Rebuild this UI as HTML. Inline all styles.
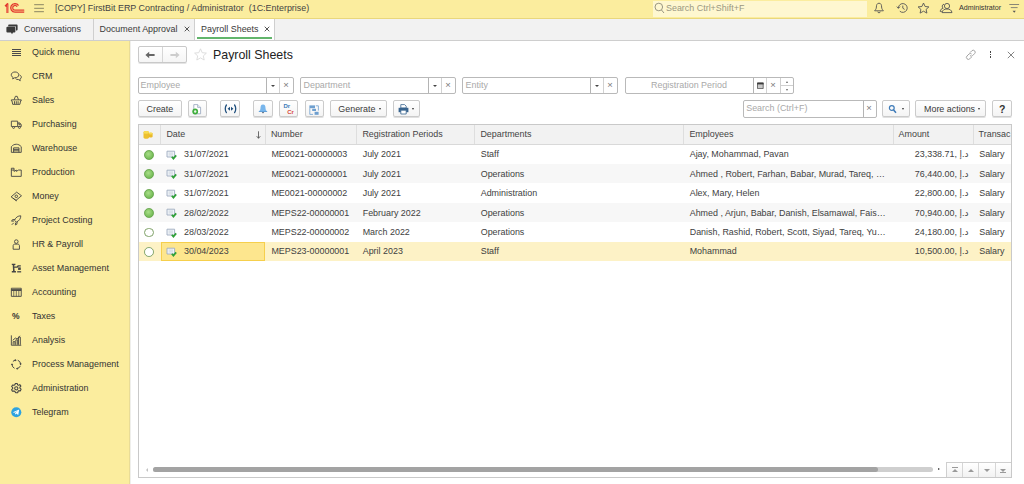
<!DOCTYPE html>
<html lang="en">
<head>
<meta charset="utf-8">
<title>Payroll Sheets</title>
<style>
*{box-sizing:border-box;margin:0;padding:0}
html,body{width:1024px;height:484px;overflow:hidden;background:#fff}
body{font-family:"Liberation Sans","DejaVu Sans",sans-serif;font-size:8.93px;color:#3a3a3a;position:relative}
.abs{position:absolute}
.t{position:absolute;white-space:pre;line-height:12px;height:12px}
/* top bar */
#top{position:absolute;left:0;top:0;width:1024px;height:19px;background:#fbed9e;border-bottom:1px solid #e9d77c}
#tabs{position:absolute;left:0;top:19px;width:1024px;height:22px;background:#f2f2f2;border-bottom:1px solid #cecece}
#side{position:absolute;left:0;top:41px;width:130px;height:443px;background:#fbed9e;box-shadow:inset -1px 0 0 #e9dc96}
#sideb{position:absolute;left:130px;top:41px;width:1px;height:443px;background:#efefec}
.tab{position:absolute;top:0;height:21px;border-right:1px solid #cfcfcf}
.tab.act{background:#fff;border-right:1px solid #cfcfcf}
.ul{position:absolute;left:2px;right:1.6px;top:18.2px;height:1.7px;background:#62b56c}
.cx{position:absolute;width:6px;height:6px}
/*si*/.si{position:absolute;left:32px;white-space:pre;line-height:12px;height:12px;color:#333}
.ico{position:absolute;left:9.7px;width:12.6px;height:12.6px;margin-top:0.7px}
.btn{position:absolute;height:17.2px;top:99.9px;border:1px solid #cbcbcb;border-radius:2px;background:linear-gradient(#fff,#f4f4f4);box-shadow:0 1px 0.5px #e0e0e0}
.btn .t{top:1.8px}
.inp{position:absolute;height:17px;top:77px;border:1px solid #b9b9b9;border-radius:2px;background:#fff}
.inp .ph{position:absolute;left:1.6px;top:1px;line-height:12px;color:#a9a9a9;white-space:pre}
.seg{position:absolute;top:-1px;height:17px;border:1px solid #b4b4b4;background:#fff}
.caret{position:absolute;width:0;height:0;border-left:2px solid transparent;border-right:2px solid transparent;border-top:2.5px solid #444}
.x{position:absolute;font-size:9.5px;color:#777;line-height:10px;margin-left:-0.7px}
/* table */
#tbl{position:absolute;left:138.2px;top:123.6px;width:873.8px;height:354px;border:1px solid #c9c9c9;background:#fff;overflow:hidden}
#thead{position:absolute;left:0;top:0;width:872px;height:20px;background:#f2f2f2;border-bottom:1px solid #d9d9d9}
.th{position:absolute;top:0;height:19px;border-right:1px solid #dedede}.th:last-child{border-right:0}
.th .t{top:3.4px;left:5.2px;color:#444}.td .t{top:3.8px;left:5px;color:#414141}
.row{position:absolute;left:0;width:872px;height:19.4px}
.row.alt{background:#f7f7f7}
.row.sel{background:#fdf2c6;height:19.4px}
.td{position:absolute;top:0;height:19.4px;overflow:hidden}
.dot{position:absolute;left:4.95px;top:5.35px;width:9.8px;height:9.8px;border-radius:50%;border:1px solid #66a64c}
.dot.f{background:radial-gradient(circle at 42% 38%,#a9de88,#72ba55 75%)}
.dot.e{background:#fff;border-color:#7fa268}
</style>
</head>
<body>
<!-- TOP BAR -->
<div id="top">
  <svg class="abs" style="left:0;top:0" width="50" height="18" viewBox="0 0 50 18">
    <g fill="none" stroke="#e2362c" stroke-linejoin="round">
      <path d="M5.300 6.400 L7.400 4.100 V12.900" stroke-width="2"/>
      <path d="M18.600 5.500 A4.300 4.300 0 1 0 15.100 12.200 H24.200" stroke-width="1.300"/>
      <path d="M17 6.700 A2.300 2.300 0 1 0 15.100 10.100 H24.200" stroke-width="1.200"/>
      <path d="M17.800 6.100 A3.300 3.300 0 1 0 15.100 11.150 H24.200" stroke-width="1" stroke="#ee8258" opacity="0.9"/>
      <path d="M7.400 4.600 V12.900" stroke-width="0.500" stroke="#f29a78"/>
    </g>
    <g stroke="#8b8663" stroke-width="1"><path d="M34.200 4.700 H43.900 M34.200 8.300 H43.900 M34.200 11.700 H43.900"/></g>
  </svg>
  <div class="t" style="left:55px;top:2px;color:#444">[COPY] FirstBit ERP Contracting / Administrator  (1C:Enterprise)</div>
  <div class="abs" style="left:652.6px;top:1px;width:214.4px;height:15.6px;background:#fef7d0"></div>
  <svg class="abs" style="left:654px;top:2.4px" width="11" height="12" viewBox="0 0 11 12"><circle cx="4.8" cy="5" r="3.8" fill="none" stroke="#8d8a78" stroke-width="0.9"/><path d="M7.5 8 L10 11" stroke="#8d8a78" stroke-width="0.9"/></svg>
  <div class="t" style="left:666px;top:2px;color:#9b9781">Search Ctrl+Shift+F</div>
  <!-- bell -->
  <svg class="abs" style="left:873.300px;top:2.200px" width="12" height="12" viewBox="0 0 12 12"><path d="M6 1.2 C3.8 1.2 3.4 3.4 3.4 5 C3.4 7 2.2 8 1.6 8.8 L10.4 8.8 C9.8 8 8.6 7 8.6 5 C8.6 3.4 8.2 1.2 6 1.2 Z M4.8 9.6 A1.2 1.2 0 0 0 7.2 9.6" fill="none" stroke="#555" stroke-width="0.9"/></svg>
  <!-- history -->
  <svg class="abs" style="left:895.500px;top:2.200px" width="13" height="12" viewBox="0 0 13 12"><path d="M2.4 6 A4.4 4.4 0 1 1 3.8 9.2" fill="none" stroke="#555" stroke-width="0.9"/><path d="M0.8 4.6 L2.4 6.4 L4 4.6" fill="none" stroke="#555" stroke-width="0.9"/><path d="M6.8 3.6 V6.2 L8.6 7.4" fill="none" stroke="#555" stroke-width="0.9"/></svg>
  <!-- star -->
  <svg class="abs" style="left:917.300px;top:2.200px" width="13" height="12" viewBox="0 0 13 12"><path d="M6.5 1 L8.1 4.5 L11.9 4.9 L9.1 7.4 L9.9 11.1 L6.5 9.2 L3.1 11.1 L3.9 7.4 L1.1 4.9 L4.9 4.5 Z" fill="none" stroke="#555" stroke-width="0.9" stroke-linejoin="round"/></svg>
  <!-- users -->
  <svg class="abs" style="left:938.500px;top:2.200px" width="14" height="12" viewBox="0 0 14 12"><g fill="none" stroke="#555" stroke-width="0.9"><circle cx="8" cy="4" r="2.6"/><path d="M3 10.6 C3.4 8 5.4 7 8 7 C10.6 7 12.6 8 13 10.6 Z"/><path d="M5 2.2 A2.2 2.2 0 0 0 4.2 6.2 C2.6 6.6 1.4 7.6 1.2 9.4 H2.8"/></g></svg>
  <div class="t" style="left:959px;top:2.400px;font-size:7.150px;color:#333">Administrator</div>
  <svg class="abs" style="left:1009px;top:3.2px" width="12" height="11" viewBox="0 0 12 11"><g stroke="#7a7a72" stroke-width="0.9" fill="none"><path d="M0.3 1.5h9.8M1.8 4.6h6.8"/></g><path d="M3.6 7.7 L6.8 7.7 L5.2 9.7 Z" fill="#555"/></svg>
</div>

<!-- TAB BAR -->
<div id="tabs">
  <div class="tab" style="left:0;width:93.5px">
    <svg class="abs" style="left:6px;top:5px" width="12" height="11" viewBox="0 0 12 11"><path d="M3 0.6 H10.6 A1 1 0 0 1 11.6 1.6 V5.6 A1 1 0 0 1 10.6 6.6 H10 V2.4 H2.2 V1.4 A0.8 0.8 0 0 1 3 0.6 Z" fill="#3a3a3a"/><path d="M1.4 2.8 H8.4 A1 1 0 0 1 9.4 3.8 V7.4 A1 1 0 0 1 8.4 8.4 H7 L6 10.2 L5 8.4 H1.4 A1 1 0 0 1 0.4 7.4 V3.8 A1 1 0 0 1 1.4 2.8 Z" fill="#3a3a3a"/></svg>
    <div class="t" style="left:24px;top:4px">Conversations</div>
  </div>
  <div class="tab" style="left:93.5px;width:101px">
    <div class="t" style="left:6px;top:4px">Document Approval</div>
    <svg class="cx" style="left:90.300px;top:7.300px" viewBox="0 0 6 6"><path d="M0.700 0.700 L5.300 5.300 M5.300 0.700 L0.700 5.300" stroke="#555" stroke-width="1"/></svg>
  </div>
  <div class="tab act" style="left:194.5px;width:80px">
    <div class="t" style="left:6.5px;top:4px">Payroll Sheets</div>
    <svg class="cx" style="left:69.200px;top:7.300px" viewBox="0 0 6 6"><path d="M0.700 0.700 L5.300 5.300 M5.300 0.700 L0.700 5.300" stroke="#555" stroke-width="1"/></svg>
    <div class="ul"></div>
  </div>
</div>

<!-- SIDEBAR -->
<div id="side">
  <!-- Quick menu -->
  <svg class="abs" style="left:11.5px;top:8px" width="9" height="7" viewBox="0 0 9 7"><g stroke="#4a4a4a" stroke-width="1"><path d="M0 0.500h9M0 2.500h9M0 4.500h9M0 6.500h9"/></g></svg>
  <div class="si" style="top:5px">Quick menu</div>
  <!-- CRM -->
  <svg class="ico" style="top:28px" viewBox="0 0 14 14"><g fill="none" stroke="#444" stroke-width="1"><path d="M5.6 2.2 C3.2 2.2 1.4 3.6 1.4 5.4 C1.4 6.6 2.2 7.6 3.4 8.2 L3 10 L5.2 8.6 C7.8 8.8 9.8 7.4 9.8 5.4 C9.8 3.6 8 2.2 5.6 2.2 Z"/><path d="M10.8 5.6 C12 6.2 12.6 7 12.6 8 C12.6 9 12 9.8 11 10.2 L11.4 12 L9.4 10.6 C8 10.8 7 10.4 6.2 9.6"/></g></svg>
  <div class="si" style="top:29px">CRM</div>
  <!-- Sales -->
  <svg class="ico" style="top:52px" viewBox="0 0 14 14"><g fill="none" stroke="#444" stroke-width="1"><path d="M1.5 6.5 H12.5 V7.5 H11.8 L11 11.5 H3 L2.2 7.5 H1.5 Z"/><path d="M4.6 6.4 L6 2.6 H8 L9.4 6.4"/><path d="M5 8v3M7 8v3M9 8v3"/></g></svg>
  <div class="si" style="top:53px">Sales</div>
  <!-- Purchasing -->
  <svg class="ico" style="top:76px" viewBox="0 0 14 14"><g fill="none" stroke="#444" stroke-width="1"><path d="M1.5 3.5 H8.5 V9.5 H1.5 Z"/><path d="M8.5 5.5 H11 L12.5 7.5 V9.5 H8.5"/><circle cx="4" cy="10.5" r="1.1" fill="#fbed9e"/><circle cx="10.5" cy="10.5" r="1.1" fill="#fbed9e"/><path d="M10 5.5v2h2"/></g></svg>
  <div class="si" style="top:77px">Purchasing</div>
  <!-- Warehouse -->
  <svg class="ico" style="top:100px" viewBox="0 0 14 14"><g fill="none" stroke="#444" stroke-width="1"><path d="M1.5 11.5 V5.2 C3 3.4 5 2.5 7 2.5 C9 2.5 11 3.4 12.500 5.2 V11.5 Z"/><path d="M4 11.5 V6.5 H10 V11.5 M4 8.2h6M4 9.8h6"/></g></svg>
  <div class="si" style="top:101px">Warehouse</div>
  <!-- Production -->
  <svg class="ico" style="top:124px" viewBox="0 0 14 14"><g fill="none" stroke="#444" stroke-width="1"><path d="M1.500 11.500 V2.500 H4.500 V6 L7 4.500 V6 L9.500 4.500 H12.500 V11.500 Z"/><path d="M1.5 4.500 H4.5"/></g></svg>
  <div class="si" style="top:125px">Production</div>
  <!-- Money -->
  <svg class="ico" style="top:148px" viewBox="0 0 14 14"><g fill="none" stroke="#444" stroke-width="1"><path d="M1.2 7.600 L7.400 2.400 L12.800 6.400 L6.600 11.600 Z"/><circle cx="7" cy="7" r="1.400"/><path d="M3 8.800 L7.600 12.200"/></g></svg>
  <div class="si" style="top:149px">Money</div>
  <!-- Project Costing -->
  <svg class="ico" style="top:172px" viewBox="0 0 14 14"><g fill="none" stroke="#444" stroke-width="1"><path d="M12 2 C9 2 6.400 3.600 5 7 L7 9 C10.400 7.600 12 5 12 2 Z"/><path d="M5.400 6 L2.600 6.400 L1.800 8 L4.400 7.800 M8 8.600 L7.600 11.400 L6 12.200 L6.200 9.600"/><path d="M2 12 L4.200 9.800"/></g></svg>
  <div class="si" style="top:173px">Project Costing</div>
  <!-- HR & Payroll -->
  <svg class="ico" style="top:196px" viewBox="0 0 14 14"><g fill="none" stroke="#444" stroke-width="1"><circle cx="7" cy="4" r="2"/><path d="M3.500 12.500 V8.500 C3.500 7.400 4.400 6.800 5.400 6.800 H8.600 C9.600 6.800 10.500 7.400 10.500 8.500 V12.500 Z"/></g></svg>
  <div class="si" style="top:197px">HR &amp; Payroll</div>
  <!-- Asset Management -->
  <svg class="ico" style="top:220px" viewBox="0 0 14 14"><g fill="#444" stroke="none"><path d="M2 2 H6 V3.200 H5 L4.600 5 H7.600 L8.600 3.600 H12 V5 H9.600 L8.400 6.400 H4.800 L5.200 10 H6.600 V11.600 H2 V10 H3.400 L3 3.200 H2 Z"/><rect x="9" y="6" width="3" height="2.800"/><rect x="8" y="10.200" width="4.400" height="1.400"/></g></svg>
  <div class="si" style="top:221px">Asset Management</div>
  <!-- Accounting -->
  <svg class="ico" style="top:244px" viewBox="0 0 14 14"><g fill="none" stroke="#444" stroke-width="1"><path d="M1.500 2.500 H12.500 V11.500 H1.500 Z"/><path d="M1.500 4.500 H12.500" stroke-width="2"/><path d="M4.200 5 V11.500 M7 5 V11.500 M9.800 5 V11.500" stroke-width="0.800"/></g></svg>
  <div class="si" style="top:245px">Accounting</div>
  <!-- Taxes -->
  <div class="abs" style="left:12px;top:269px;font-size:8.500px;line-height:12px;color:#333;font-weight:bold">%</div>
  <div class="si" style="top:269px">Taxes</div>
  <!-- Analysis -->
  <svg class="ico" style="top:292px" viewBox="0 0 14 14"><g fill="none" stroke="#444" stroke-width="1"><path d="M1.500 1.500 V12.500 H12.500"/><path d="M3.500 12 V8.500 H5.500 V12 M6.500 12 V6.500 H8.500 V12 M9.500 12 V3.500 H11.500 V12" /><path d="M3 7 L6 4.500 L8 5.500 L11 2"/></g></svg>
  <div class="si" style="top:293px">Analysis</div>
  <!-- Process Management -->
  <svg class="ico" style="top:316px" viewBox="0 0 14 14"><g fill="none" stroke="#444" stroke-width="1.100"><path d="M3.200 4 A4.800 4.800 0 0 1 6 2.300"/><path d="M8.600 2.500 A4.800 4.800 0 0 1 11.800 6.600"/><path d="M11.400 9 A4.800 4.800 0 0 1 7.600 11.800"/><path d="M5 11.400 A4.800 4.800 0 0 1 2.200 7"/></g><g fill="#444"><path d="M5.400 1 L7.400 2.400 L5.400 3.800Z"/><path d="M10.400 6 L13 6 L11.800 8.200Z"/><path d="M8.400 10.600 L6.600 12 L8.600 13.200Z"/><path d="M1 7.800 L3.600 7.800 L2.200 5.800Z"/></g></svg>
  <div class="si" style="top:317px">Process Management</div>
  <!-- Administration -->
  <svg class="ico" style="top:340px" viewBox="0 0 14 14"><g fill="none" stroke="#444" stroke-width="1"><circle cx="7" cy="7" r="1.800" stroke-width="1.200"/><path stroke-width="1.200" d="M6 1.600 H8 L8.400 3.200 L9.400 3.700 L10.900 2.900 L12.100 4.600 L11 5.800 V6.900 L12.300 8 L11.400 9.900 L9.800 9.600 L8.900 10.300 L8.700 12 H6.600 L5.300 10.400 L4.300 9.900 L2.700 10.300 L1.800 8.500 L3 7.400 V6.300 L1.800 5 L2.900 3.300 L4.400 3.700 L5.400 3.100 Z" stroke-linejoin="round"/></g></svg>
  <div class="si" style="top:341px">Administration</div>
  <!-- Telegram -->
  <svg class="ico" style="top:364px" viewBox="0 0 14 14"><circle cx="7" cy="7" r="5.600" fill="#2ea3e0"/><path d="M3.200 6.900 L10.200 4 L9.200 10 L6.800 8.400 L5.800 9.600 L5.600 7.800 L8.800 5.200 L4.800 7.600 Z" fill="#fff"/></svg>
  <div class="si" style="top:365px">Telegram</div>
</div>
<div id="sideb"></div>

<!-- CONTENT -->
<div id="content">
  <!-- nav buttons -->
  <div class="abs" style="left:138.400px;top:46.300px;width:48.400px;height:16.400px;border:1px solid #c9c9c9;border-radius:2px;background:linear-gradient(#fff,#f5f5f5);box-shadow:0 1px 0 #e4e4e4"></div>
  <div class="abs" style="left:162.300px;top:47px;width:1px;height:15px;background:#d6d6d6"></div>
  <svg class="abs" style="left:145.400px;top:50.700px" width="10" height="8" viewBox="0 0 10 8"><path d="M0.400 4 L4.200 0.800 V3.100 H9.600 V4.900 H4.200 V7.200 Z" fill="#666"/></svg>
  <svg class="abs" style="left:169.600px;top:50.700px" width="10" height="8" viewBox="0 0 10 8"><path d="M9.600 4 L5.800 0.800 V3.100 H0.400 V4.900 H5.800 V7.200 Z" fill="#cdcdcd"/></svg>
  <svg class="abs" style="left:194.300px;top:48.300px" width="13" height="13" viewBox="0 0 13 13"><path d="M6.500 0.800 L8.200 4.700 L12.400 5.100 L9.300 7.900 L10.200 12 L6.500 9.900 L2.800 12 L3.700 7.900 L0.600 5.100 L4.800 4.700 Z" fill="none" stroke="#dadada" stroke-width="0.900" stroke-linejoin="round"/></svg>
  <div class="abs" style="left:213px;top:47px;font-size:12.400px;line-height:16px;color:#222;white-space:pre">Payroll Sheets</div>
  <!-- right icons -->
  <svg class="abs" style="left:964.800px;top:49.200px" width="12" height="12" viewBox="0 0 12 12"><g fill="none" stroke="#9a9a9a" stroke-width="0.900"><path d="M5 3.600 L6.800 1.800 A1.900 1.900 0 0 1 9.600 4.600 L7.600 6.600 A1.900 1.900 0 0 1 5 6.600"/><path d="M6.600 8 L4.800 9.800 A1.900 1.900 0 0 1 2 7 L4 5 A1.900 1.900 0 0 1 6.600 5"/></g></svg>
  <div class="abs" style="left:989.700px;top:51.400px;width:1.600px;height:1.600px;background:#444"></div>
  <div class="abs" style="left:989.700px;top:53.900px;width:1.600px;height:1.600px;background:#444"></div>
  <div class="abs" style="left:989.700px;top:56.400px;width:1.600px;height:1.600px;background:#444"></div>
  <svg class="abs" style="left:1007.300px;top:50.600px" width="8" height="8" viewBox="0 0 8 8"><path d="M0.800 0.800 L7.200 7.200 M7.200 0.800 L0.800 7.200" stroke="#777" stroke-width="0.900"/></svg>

  <!-- filter row -->
  <div class="inp" style="left:138px;width:156px"><div class="ph">Employee</div>
    <div class="abs" style="left:127px;top:0;width:1px;height:15px;background:#b4b4b4"></div>
    <div class="caret" style="left:132px;top:6.500px"></div>
    <div class="abs" style="left:140px;top:0;width:1px;height:15px;background:#d2d2d2"></div>
    <div class="x" style="left:145px;top:1.800px">×</div>
  </div>
  <div class="inp" style="left:300px;width:156px"><div class="ph" style="left:2.500px">Department</div>
    <div class="abs" style="left:127px;top:0;width:1px;height:15px;background:#b4b4b4"></div>
    <div class="caret" style="left:132px;top:6.500px"></div>
    <div class="abs" style="left:140px;top:0;width:1px;height:15px;background:#d2d2d2"></div>
    <div class="x" style="left:145px;top:1.800px">×</div>
  </div>
  <div class="inp" style="left:462px;width:156px"><div class="ph" style="left:2.600px">Entity</div>
    <div class="abs" style="left:127px;top:0;width:1px;height:15px;background:#b4b4b4"></div>
    <div class="caret" style="left:132px;top:6.500px"></div>
    <div class="abs" style="left:140px;top:0;width:1px;height:15px;background:#d2d2d2"></div>
    <div class="x" style="left:145px;top:1.800px">×</div>
  </div>
  <div class="inp" style="left:625px;width:169px"><div class="ph" style="left:25px">Registration Period</div>
    <div class="abs" style="left:127px;top:0;width:1px;height:15px;background:#b4b4b4"></div>
    <svg class="abs" style="left:130.700px;top:3.800px" width="7" height="7" viewBox="0 0 7 7"><path d="M0.500 1 H6.200 V6.600 H0.500 Z" fill="#c9c9c9" stroke="#3c3c3c" stroke-width="0.700"/><path d="M0.200 0.600 H6.500 V2.400 H0.200 Z" fill="#3c3c3c"/></svg>
    <div class="abs" style="left:140px;top:0;width:1px;height:15px;background:#d2d2d2"></div>
    <div class="x" style="left:145px;top:1.800px">×</div>
    <div class="abs" style="left:154px;top:0;width:1px;height:15px;background:#cfcfcf"></div>
    <div class="abs" style="left:155px;top:7px;width:12px;height:1px;background:#cfcfcf"></div>
    <div class="abs" style="left:160px;top:3px;width:0;height:0;border-left:1.500px solid transparent;border-right:1.500px solid transparent;border-bottom:2px solid #666"></div>
    <div class="abs" style="left:160px;top:10.500px;width:0;height:0;border-left:1.500px solid transparent;border-right:1.500px solid transparent;border-top:2px solid #666"></div>
  </div>

  <!-- toolbar -->
  <div class="btn" style="left:138.200px;width:43.500px"><div class="t" style="left:7.300px">Create</div></div>
  <div class="btn" style="left:187.700px;width:19.300px">
    <svg class="abs" style="left:3.600px;top:3.200px" width="11" height="11" viewBox="0 0 11 11"><path d="M1.800 0.600 H5.600 L8.600 3.400 V9.800 H1.800 Z" fill="#fff" stroke="#93a3bb" stroke-width="0.800"/><path d="M5.600 0.600 V3.400 H8.600" fill="#e6ecf3" stroke="#93a3bb" stroke-width="0.700"/><circle cx="3.200" cy="7.500" r="2.900" fill="#3fae3c"/><circle cx="3.200" cy="7.500" r="1.200" fill="#eaf7e6"/></svg>
  </div>
  <div class="btn" style="left:220.300px;width:19.700px">
    <svg class="abs" style="left:3.200px;top:3.600px" width="13" height="10" viewBox="0 0 13 10"><g fill="none" stroke="#1f4f7d" stroke-width="1.300" stroke-linecap="round"><path d="M2.400 1 C0.900 3 0.900 6.600 2.400 8.600"/><path d="M10.600 1 C12.100 3 12.100 6.600 10.600 8.600"/></g><path d="M3.600 4.800 L6 2.800 V6.800 Z M9.400 4.800 L7 2.800 V6.800 Z" fill="#1f4f7d"/></svg>
  </div>
  <div class="btn" style="left:253.300px;width:19.500px">
    <svg class="abs" style="left:3.700px;top:3.200px" width="10" height="11" viewBox="0 0 10 11"><path d="M5 0.600 C3 0.600 2.500 2.400 2.500 4 C2.500 6 1.600 6.800 0.600 7.800 H9.400 C8.400 6.800 7.500 6 7.500 4 C7.500 2.400 7 0.600 5 0.600 Z" fill="#78b6ec"/><path d="M0.600 7.800 H9.400 L8.800 7 H1.200 Z" fill="#4f93d2"/><path d="M3.900 8.200 A1.100 1.100 0 0 0 6.100 8.200 Z" fill="#3a4f66"/></svg>
  </div>
  <div class="btn" style="left:278.700px;width:19.300px">
    <div class="abs" style="left:3.700px;top:2.200px;font-size:6px;line-height:7px;font-weight:bold;color:#3a7ab8">Dr</div>
    <div class="abs" style="left:7.500px;top:7.800px;font-size:6px;line-height:7px;font-weight:bold;color:#d8453a">Cr</div>
  </div>
  <div class="btn" style="left:304.500px;width:19.200px">
    <svg class="abs" style="left:2.800px;top:2.800px" width="12" height="12" viewBox="0 0 12 12"><g fill="#6e9fcf"><rect x="1.400" y="1.400" width="5.600" height="2.800"/><rect x="4.200" y="4.800" width="3.800" height="2.200"/><rect x="6.600" y="7.800" width="4" height="3"/></g><path d="M1.800 4.200 V10.400 H5 M7.800 1.800 H10.400 V6.600" fill="none" stroke="#6e9fcf" stroke-width="0.800"/></svg>
  </div>
  <div class="btn" style="left:330.400px;width:56.200px"><div class="t" style="left:6.900px">Generate</div><div class="caret" style="left:48px;top:7.400px;margin-left:-0.400px;border-left-width:1.800px;border-right-width:1.800px;border-top-width:2.200px;border-top-color:#333"></div></div>
  <div class="btn" style="left:393.400px;width:26.400px">
    <svg class="abs" style="left:3.500px;top:3.300px" width="11" height="11" viewBox="0 0 11 11"><path d="M2.800 0.600 H6.600 L8.200 2.200 V4 H2.800 Z" fill="#fff" stroke="#38648f" stroke-width="0.800"/><path d="M0.600 3.800 H10.400 V8.200 H0.600 Z" fill="#38648f"/><path d="M2.800 6.200 H8.200 V10 H2.800 Z" fill="#fff" stroke="#38648f" stroke-width="0.800"/></svg>
    <div class="caret" style="left:18px;top:7.400px;margin-left:-0.400px;border-left-width:1.800px;border-right-width:1.800px;border-top-width:2.200px;border-top-color:#333"></div>
  </div>
  <!-- right toolbar -->
  <div class="inp" style="left:743px;top:100px;width:134px;height:18px"><div class="ph" style="top:1.300px;left:2.200px">Search (Ctrl+F)</div>
    <div class="abs" style="left:119px;top:0;width:1px;height:16px;background:#b4b4b4"></div>
    <div class="x" style="left:123px;top:2.400px">×</div>
  </div>
  <div class="btn" style="left:882px;width:28px">
    <svg class="abs" style="left:4.500px;top:3px" width="10" height="11" viewBox="0 0 10 11"><circle cx="3.800" cy="4" r="2.400" fill="none" stroke="#3d7ab8" stroke-width="1.200"/><path d="M5.600 6 L8 8.800" stroke="#3d7ab8" stroke-width="1.500"/></svg>
    <div class="caret" style="left:19px;top:7.400px;margin-left:-0.400px;border-left-width:1.800px;border-right-width:1.800px;border-top-width:2.200px;border-top-color:#333"></div>
  </div>
  <div class="btn" style="left:915px;width:71.200px"><div class="t" style="left:8px">More actions</div><div class="caret" style="left:62.400px;top:7.400px;margin-left:-0.400px;border-left-width:1.800px;border-right-width:1.800px;border-top-width:2.200px;border-top-color:#333"></div></div>
  <div class="btn" style="left:992px;width:20px"><div class="t" style="left:6px;font-weight:bold;font-size:10.500px;color:#333">?</div></div>
<div id="tbl">
<div id="thead">
<div class="th" style="left:0px;width:22px"><svg class="abs" style="left:4px;top:5px" width="11" height="10" viewBox="0 0 11 10"><path d="M0.500 2.400 C0.500 0.600 6 0.600 6 2.400 V7.400 C6 9.200 0.500 9.200 0.500 7.400 Z" fill="#edc02f"/><ellipse cx="3.250" cy="2.400" rx="2.750" ry="1.300" fill="#f8dc52"/><path d="M5.600 3.600 C5.600 2.300 9.600 2.300 9.600 3.600 V6.600 C9.600 7.900 5.600 7.900 5.600 6.600 Z" fill="#e9b92b"/><ellipse cx="7.600" cy="3.600" rx="2" ry="1" fill="#f8dc52"/></svg></div>
<div class="th" style="left:22px;width:104.5px"><div class="t">Date</div><svg class="abs" style="left:94.900px;top:6.500px" width="5" height="8" viewBox="0 0 5 8"><path d="M2.500 0.300 V7.200 M0.700 5.200 L2.500 7.300 L4.300 5.200" fill="none" stroke="#4a4a4a" stroke-width="0.800"/></svg></div>
<div class="th" style="left:126.5px;width:91.5px"><div class="t">Number</div></div>
<div class="th" style="left:218px;width:118px"><div class="t">Registration Periods</div></div>
<div class="th" style="left:336px;width:209px"><div class="t">Departments</div></div>
<div class="th" style="left:545px;width:210.20000000000005px"><div class="t">Employees</div></div>
<div class="th" style="left:755.2px;width:79.79999999999995px"><div class="t" style="left:4.2px">Amount</div></div>
<div class="th" style="left:835px;width:38px"><div class="t" style="left:4.4px">Transac</div></div>
</div>
<div class="row" style="top:20.0px">
<div class="dot f"></div>
<svg class="abs" style="left:26.500px;top:5.500px" width="11" height="10" viewBox="0 0 11 10"><path d="M1 1.200 H8.600 V7 H1 Z" fill="#f1f5f9" stroke="#9eacc0" stroke-width="0.900"/><path d="M2.600 3.100 H7 M2.600 4.900 H7" stroke="#c3ccd8" stroke-width="0.800"/><path d="M5.800 6.800 L7.400 8.600 L10.200 5.400" fill="none" stroke="#2fa037" stroke-width="1.700"/></svg>
<div class="td" style="left:41px;width:85px"><div class="t" style="left:3.800px">31/07/2021</div></div>
<div class="td" style="left:127px;width:91px"><div class="t" style="left:5.200px">ME0021-00000003</div></div>
<div class="td" style="left:218px;width:118px"><div class="t" style="left:5.500px">July 2021</div></div>
<div class="td" style="left:336px;width:209px"><div class="t" style="left:5.500px">Staff</div></div>
<div class="td" style="left:545px;width:209px"><div class="t" style="left:5.500px">Ajay, Mohammad, Pavan</div></div>
<div class="td" style="left:754px;width:81px"><div class="t" style="left:auto;right:5.800px" dir="ltr">23,338.71, <span class="ar">د.إ</span></div></div>
<div class="td" style="left:835px;width:37px"><div class="t" style="left:5px">Salary</div></div>
</div>
<div class="row alt" style="top:39.4px">
<div class="dot f"></div>
<svg class="abs" style="left:26.500px;top:5.500px" width="11" height="10" viewBox="0 0 11 10"><path d="M1 1.200 H8.600 V7 H1 Z" fill="#f1f5f9" stroke="#9eacc0" stroke-width="0.900"/><path d="M2.600 3.100 H7 M2.600 4.900 H7" stroke="#c3ccd8" stroke-width="0.800"/><path d="M5.800 6.800 L7.400 8.600 L10.200 5.400" fill="none" stroke="#2fa037" stroke-width="1.700"/></svg>
<div class="td" style="left:41px;width:85px"><div class="t" style="left:3.800px">31/07/2021</div></div>
<div class="td" style="left:127px;width:91px"><div class="t" style="left:5.200px">ME0021-00000001</div></div>
<div class="td" style="left:218px;width:118px"><div class="t" style="left:5.500px">July 2021</div></div>
<div class="td" style="left:336px;width:209px"><div class="t" style="left:5.500px">Operations</div></div>
<div class="td" style="left:545px;width:209px"><div class="t" style="left:5.500px">Ahmed , Robert, Farhan, Babar, Murad, Tareq, …</div></div>
<div class="td" style="left:754px;width:81px"><div class="t" style="left:auto;right:5.800px" dir="ltr">76,440.00, <span class="ar">د.إ</span></div></div>
<div class="td" style="left:835px;width:37px"><div class="t" style="left:5px">Salary</div></div>
</div>
<div class="row" style="top:58.8px">
<div class="dot f"></div>
<svg class="abs" style="left:26.500px;top:5.500px" width="11" height="10" viewBox="0 0 11 10"><path d="M1 1.200 H8.600 V7 H1 Z" fill="#f1f5f9" stroke="#9eacc0" stroke-width="0.900"/><path d="M2.600 3.100 H7 M2.600 4.900 H7" stroke="#c3ccd8" stroke-width="0.800"/><path d="M5.800 6.800 L7.400 8.600 L10.200 5.400" fill="none" stroke="#2fa037" stroke-width="1.700"/></svg>
<div class="td" style="left:41px;width:85px"><div class="t" style="left:3.800px">31/07/2021</div></div>
<div class="td" style="left:127px;width:91px"><div class="t" style="left:5.200px">ME0021-00000002</div></div>
<div class="td" style="left:218px;width:118px"><div class="t" style="left:5.500px">July 2021</div></div>
<div class="td" style="left:336px;width:209px"><div class="t" style="left:5.500px">Administration</div></div>
<div class="td" style="left:545px;width:209px"><div class="t" style="left:5.500px">Alex, Mary, Helen</div></div>
<div class="td" style="left:754px;width:81px"><div class="t" style="left:auto;right:5.800px" dir="ltr">22,800.00, <span class="ar">د.إ</span></div></div>
<div class="td" style="left:835px;width:37px"><div class="t" style="left:5px">Salary</div></div>
</div>
<div class="row alt" style="top:78.2px">
<div class="dot f"></div>
<svg class="abs" style="left:26.500px;top:5.500px" width="11" height="10" viewBox="0 0 11 10"><path d="M1 1.200 H8.600 V7 H1 Z" fill="#f1f5f9" stroke="#9eacc0" stroke-width="0.900"/><path d="M2.600 3.100 H7 M2.600 4.900 H7" stroke="#c3ccd8" stroke-width="0.800"/><path d="M5.800 6.800 L7.400 8.600 L10.200 5.400" fill="none" stroke="#2fa037" stroke-width="1.700"/></svg>
<div class="td" style="left:41px;width:85px"><div class="t" style="left:3.800px">28/02/2022</div></div>
<div class="td" style="left:127px;width:91px"><div class="t" style="left:5.200px">MEPS22-00000001</div></div>
<div class="td" style="left:218px;width:118px"><div class="t" style="left:5.500px">February 2022</div></div>
<div class="td" style="left:336px;width:209px"><div class="t" style="left:5.500px">Operations</div></div>
<div class="td" style="left:545px;width:209px"><div class="t" style="left:5.500px">Ahmed , Arjun, Babar, Danish, Elsamawal, Fais…</div></div>
<div class="td" style="left:754px;width:81px"><div class="t" style="left:auto;right:5.800px" dir="ltr">70,940.00, <span class="ar">د.إ</span></div></div>
<div class="td" style="left:835px;width:37px"><div class="t" style="left:5px">Salary</div></div>
</div>
<div class="row" style="top:97.6px">
<div class="dot e"></div>
<svg class="abs" style="left:26.500px;top:5.500px" width="11" height="10" viewBox="0 0 11 10"><path d="M1 1.200 H8.600 V7 H1 Z" fill="#f1f5f9" stroke="#9eacc0" stroke-width="0.900"/><path d="M2.600 3.100 H7 M2.600 4.900 H7" stroke="#c3ccd8" stroke-width="0.800"/><path d="M5.800 6.800 L7.400 8.600 L10.200 5.400" fill="none" stroke="#2fa037" stroke-width="1.700"/></svg>
<div class="td" style="left:41px;width:85px"><div class="t" style="left:3.800px">28/03/2022</div></div>
<div class="td" style="left:127px;width:91px"><div class="t" style="left:5.200px">MEPS22-00000002</div></div>
<div class="td" style="left:218px;width:118px"><div class="t" style="left:5.500px">March 2022</div></div>
<div class="td" style="left:336px;width:209px"><div class="t" style="left:5.500px">Operations</div></div>
<div class="td" style="left:545px;width:209px"><div class="t" style="left:5.500px">Danish, Rashid, Robert, Scott, Siyad, Tareq, Yu…</div></div>
<div class="td" style="left:754px;width:81px"><div class="t" style="left:auto;right:5.800px" dir="ltr">24,180.00, <span class="ar">د.إ</span></div></div>
<div class="td" style="left:835px;width:37px"><div class="t" style="left:5px">Salary</div></div>
</div>
<div class="row alt sel" style="top:117.0px">
<div class="abs" style="left:22px;top:0.200px;width:103.600px;height:19.100px;background:#fde68e;border:1px solid #f6cf4c"></div>
<div class="dot e"></div>
<svg class="abs" style="left:26.500px;top:5.500px" width="11" height="10" viewBox="0 0 11 10"><path d="M1 1.200 H8.600 V7 H1 Z" fill="#f1f5f9" stroke="#9eacc0" stroke-width="0.900"/><path d="M2.600 3.100 H7 M2.600 4.900 H7" stroke="#c3ccd8" stroke-width="0.800"/><path d="M5.800 6.800 L7.400 8.600 L10.200 5.400" fill="none" stroke="#2fa037" stroke-width="1.700"/></svg>
<div class="td" style="left:41px;width:85px"><div class="t" style="left:3.800px">30/04/2023</div></div>
<div class="td" style="left:127px;width:91px"><div class="t" style="left:5.200px">MEPS23-00000001</div></div>
<div class="td" style="left:218px;width:118px"><div class="t" style="left:5.500px">April 2023</div></div>
<div class="td" style="left:336px;width:209px"><div class="t" style="left:5.500px">Staff</div></div>
<div class="td" style="left:545px;width:209px"><div class="t" style="left:5.500px">Mohammad</div></div>
<div class="td" style="left:754px;width:81px"><div class="t" style="left:auto;right:5.800px" dir="ltr">10,500.00, <span class="ar">د.إ</span></div></div>
<div class="td" style="left:835px;width:37px"><div class="t" style="left:5px">Salary</div></div>
</div>
<div class="abs" style="left:14px;top:342.500px;width:779.500px;height:5px;border-radius:2.500px;background:#cfcfcf"></div>
<div class="abs" style="left:14px;top:342.500px;width:725px;height:5px;border-radius:2.500px;background:#a3a3a3"></div>
<div class="abs" style="left:6.500px;top:343px;width:0;height:0;border-top:2px solid transparent;border-bottom:2px solid transparent;border-right:2.800px solid #c2c2c2"></div>
<div class="abs" style="left:799.300px;top:343.400px;width:0;height:0;border-top:1.600px solid transparent;border-bottom:1.600px solid transparent;border-left:2.600px solid #333"></div>
<div class="abs" style="left:807px;top:337px;width:66px;height:16px;background:linear-gradient(#fff,#f1f1f1);border-top:1px solid #cfcfcf;border-left:1px solid #cfcfcf"></div>
<div class="abs" style="left:823.1px;top:338px;width:1px;height:15px;background:#d6d6d6"></div>
<div class="abs" style="left:839.3px;top:338px;width:1px;height:15px;background:#d6d6d6"></div>
<div class="abs" style="left:855.5px;top:338px;width:1px;height:15px;background:#d6d6d6"></div>
<div class="abs" style="left:812.5px;top:344px;width:0;height:0;border-left:3px solid transparent;border-right:3px solid transparent;border-bottom:3px solid #9a9a9a"></div>
<div class="abs" style="left:812.500px;top:342.500px;width:6px;height:1px;background:#9a9a9a"></div>
<div class="abs" style="left:829px;top:344px;width:0;height:0;border-left:3px solid transparent;border-right:3px solid transparent;border-bottom:3px solid #9a9a9a"></div>
<div class="abs" style="left:845px;top:344px;width:0;height:0;border-left:3px solid transparent;border-right:3px solid transparent;border-top:3px solid #9a9a9a"></div>
<div class="abs" style="left:861px;top:344px;width:0;height:0;border-left:3px solid transparent;border-right:3px solid transparent;border-top:3px solid #9a9a9a"></div>
<div class="abs" style="left:861px;top:347.500px;width:6px;height:1px;background:#9a9a9a"></div>
</div>
<!--/tbl-->
</div>
</body>
</html>
